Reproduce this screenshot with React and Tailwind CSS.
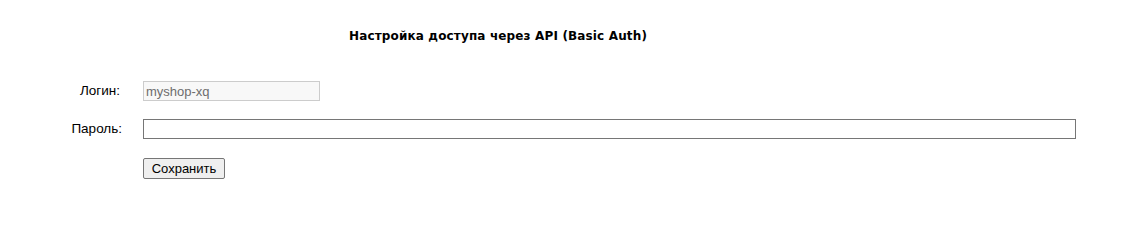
export default function App() {
  return (
    <div className="w-[1141px] h-[229px] bg-white text-black font-['Liberation_Sans',Arial,sans-serif] text-[13px]">
      <div className="w-[996px] pt-[28px] text-center">
        <h1 className="font-['DejaVu_Sans',Verdana,sans-serif] font-bold text-[12px] leading-[16px] tracking-[0.15px]">
          Настройка доступа через API (Basic Auth)
        </h1>
      </div>
      <form className="pt-[37px] flex flex-col gap-[18px]">
        <div className="flex items-center">
          <label className="w-[121px] text-right pr-[1px] text-[13.5px]">Логин:</label>
          <input
            readOnly
            value="myshop-xq"
            className="ml-[22px] w-[177px] h-[20px] px-[2px] border border-[#cccccc] bg-[#f8f8f8] text-[#6d6d6d] text-[13px] outline-none"
          />
        </div>
        <div className="flex items-center">
          <label className="w-[122px] text-right text-[13.5px]">Пароль:</label>
          <input
            readOnly
            value=""
            className="ml-[21px] w-[933px] h-[20px] px-[2px] border border-[#767676] bg-white outline-none"
          />
        </div>
        <div className="pl-[143px]">
          <button
            type="button"
            className="h-[21px] w-[82px] border border-[#767676] rounded-[2px] bg-[#efefef] text-[13px] leading-[19px]"
          >
            Сохранить
          </button>
        </div>
      </form>
    </div>
  );
}
